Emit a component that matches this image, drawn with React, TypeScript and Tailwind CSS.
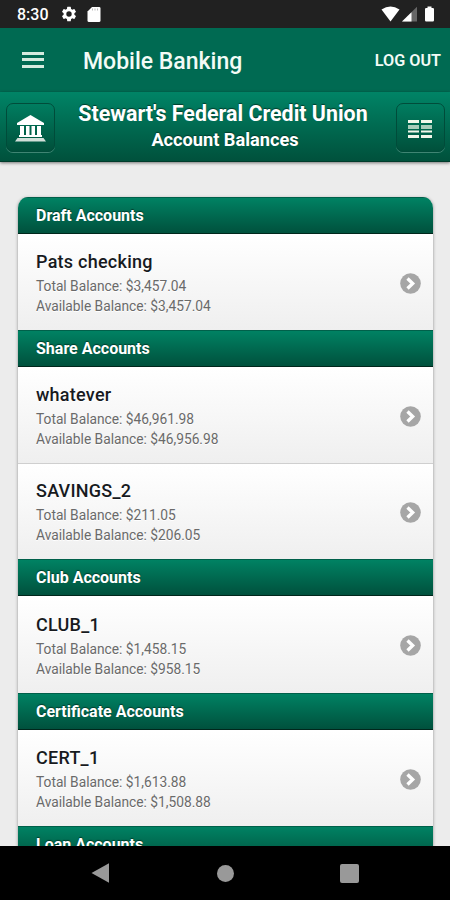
import React from "react";

type Account = { name: string; total: string; available: string; tall?: boolean };
type Group = { title: string; accounts: Account[] };

const groups: Group[] = [
  { title: "Draft Accounts", accounts: [{ name: "Pats checking", total: "$3,457.04", available: "$3,457.04" }] },
  {
    title: "Share Accounts",
    accounts: [
      { name: "whatever", total: "$46,961.98", available: "$46,956.98" },
      { name: "SAVINGS_2", total: "$211.05", available: "$206.05" },
    ],
  },
  { title: "Club Accounts", accounts: [{ name: "CLUB_1", total: "$1,458.15", available: "$958.15", tall: true }] },
  { title: "Certificate Accounts", accounts: [{ name: "CERT_1", total: "$1,613.88", available: "$1,508.88" }] },
  { title: "Loan Accounts", accounts: [] },
];

function StatusBar() {
  return (
    <div className="flex h-7 shrink-0 items-center bg-[#212121] pl-[17px] pr-[15px] text-white">
      <span className="w-[33px] whitespace-nowrap pt-[2px] text-[16px] font-medium leading-7">8:30</span>
      <svg className="ml-[10px] h-[18px] w-[18px]" viewBox="0 0 24 24" fill="currentColor">
        <path d="M19.14 12.94c.04-.3.06-.61.06-.94 0-.32-.02-.64-.07-.94l2.03-1.58a.49.49 0 0 0 .12-.61l-1.92-3.32a.49.49 0 0 0-.59-.22l-2.39.96c-.5-.38-1.03-.7-1.62-.94l-.36-2.54a.48.48 0 0 0-.48-.41h-3.84a.48.48 0 0 0-.47.41l-.36 2.54c-.59.24-1.13.57-1.62.94l-2.39-.96a.48.48 0 0 0-.59.22L2.74 8.87a.48.48 0 0 0 .12.61l2.03 1.58c-.05.3-.09.63-.09.94s.02.64.07.94l-2.03 1.58a.49.49 0 0 0-.12.61l1.92 3.32c.12.22.37.29.59.22l2.39-.96c.5.38 1.03.7 1.62.94l.36 2.54c.05.24.24.41.48.41h3.84c.24 0 .44-.17.47-.41l.36-2.54c.59-.24 1.13-.56 1.62-.94l2.39.96c.22.08.47 0 .59-.22l1.92-3.32a.48.48 0 0 0-.12-.61zM12 15.6A3.6 3.6 0 1 1 12 8.4a3.6 3.6 0 0 1 0 7.2z" />
      </svg>
      <svg className="ml-[9px] h-[15px] w-[14px]" viewBox="0 0 14 15" fill="currentColor">
        <path d="M5 0h7.2Q13.5 0 13.5 1.4v12Q13.5 15 12 15H2Q.5 15 .5 13.500V4.500z" />
        <path d="M5.500 1.500v2M8 1.500v2M10.500 1.500v2" stroke="#aaa" strokeWidth=".8" />
      </svg>
      <div className="grow" />
      <svg className="h-4 w-[54px]" viewBox="0 0 54 16" fill="currentColor">
        <path d="M.5 3.6Q9.500-2.800 18.500 3.600L9.500 15.500Z" />
        <path d="M21 15.500 36 .8V15.500Z" fill="#666" />
        <path d="M21 15.500 30.500 6.200V15.500Z" />
        <path d="M46.500.5h4v1.600h1.400q1.100 0 1.100 1.200v11q0 1.200-1.200 1.200h-6.600q-1.200 0-1.200-1.200v-11q0-1.200 1.100-1.200h1.400z" />
      </svg>
    </div>
  );
}

function AppBar() {
  return (
    <div className="flex h-16 shrink-0 items-center bg-[#006a52] pl-[22px] pr-[9px] text-[#f3fbf6]">
      <div className="flex w-[22px] flex-col gap-[3.500px] pb-[1px]">
        <div className="h-[3px] bg-[#d5ebdf]" />
        <div className="h-[3px] bg-[#d5ebdf]" />
        <div className="h-[3px] bg-[#d5ebdf]" />
      </div>
      <h1 className="ml-[39px] whitespace-nowrap pt-[3px] text-[23px] font-medium leading-7">Mobile Banking</h1>
      <div className="grow" />
      <span className="whitespace-nowrap pt-[2px] text-[16.200px] font-semibold leading-6">LOG OUT</span>
    </div>
  );
}

const squareButton =
  "mt-[11px] flex h-[49px] w-[49px] shrink-0 items-center justify-center rounded-[7px] border border-[#004c3a] bg-linear-to-b from-[#007d60] to-[#00503b] shadow-[0_1px_0_#3f8573]";

function TitleBar() {
  return (
    <header className="relative flex h-[70px] shrink-0 items-start justify-between border-b border-[#003c2c] bg-linear-to-b from-[#008466] to-[#00513c] pl-[6px] pr-[5px] shadow-[0_1px_3px_#00000080]">
      <button className={squareButton}>
        <svg className="mt-[2px] h-[27px] w-[31px]" viewBox="0 0 31 27" fill="white">
          <path d="M15.500 0 29 8v2H2V8z" />
          <path d="M5 11h4v10H5zM11 11h3.500v10H11zM16.500 11H20v10h-3.500zM22 11h4v10h-4z" />
          <path d="M4 20h23v2H4z" />
          <path d="M2.500 23h26l2.500 3.500H0z" fill="#d2dfd9" />
        </svg>
      </button>
      <div className="flex flex-col items-center whitespace-nowrap pr-[5px] pt-[8px] font-bold text-white [text-shadow:0_-1px_1px_#003c2c]">
        <span className="text-[21.400px] leading-[27px]">Stewart's Federal Credit Union</span>
        <span className="pl-1 text-[18.200px] leading-[26px]">Account Balances</span>
      </div>
      <button className={squareButton}>
        <svg className="mt-[3px] h-[18px] w-6" viewBox="0 0 24 18" fill="#f2f7ea">
          <path d="M0 0h11v3H0zM13 0h11v3H13zM0 15h11v3H0zM13 15h11v3H13zM0 10.500h11v2H0zM13 10.500h11v2H13z" />
          <path d="M0 5h11v4H0zM13 5h11v4H13z" fill="#a9ccba" />
        </svg>
      </button>
    </header>
  );
}

function AccountRow({ account }: { account: Account }) {
  return (
    <li className={(account.tall ? "h-[97px]" : "h-24") + " flex items-center justify-between border-t border-[#cfcfcf] bg-linear-to-b from-white to-[#efefef] pl-[18px] pr-3 first:border-white"}>
      <div className="whitespace-nowrap pb-px text-[13.750px] leading-5 text-[#6a6a6a] [text-shadow:0_1px_0_white]">
        <h2 className="text-[18px] font-medium leading-7 tracking-[0.25px] text-[#171a1e]">{account.name}</h2>
        <p>Total Balance: {account.total}</p>
        <p>Available Balance: {account.available}</p>
      </div>
      <svg className="mt-px h-[21px] w-[21px]" viewBox="0 0 21 21">
        <circle cx="10.500" cy="10.500" r="10.300" fill="#a6a6a6" />
        <path d="m7.500 5.500 5.200 5-5.200 5" fill="none" stroke="white" strokeWidth="3.300" />
      </svg>
    </li>
  );
}

export default function App() {
  return (
    <div className="flex h-[900px] w-[450px] flex-col overflow-hidden bg-[#ececec] font-['Roboto',sans-serif]">
      <StatusBar />
      <AppBar />
      <TitleBar />
      <main className="min-h-0 grow overflow-hidden pl-[17px] pr-4 pt-[35px]">
        <div className="overflow-hidden rounded-t-[11px] border-x border-[#c8c8c8] shadow-[0_0_3px_#00000030]">
          {groups.map((group) => (
            <section key={group.title}>
              <h3 className="h-[37px] whitespace-nowrap border-y border-t-[#00604a] border-b-[#00271c] bg-linear-to-b from-[#008263] to-[#00513d] pl-[18px] text-[16px] font-bold leading-[35px] text-white [text-shadow:0_-1px_1px_#003c2c]">
                {group.title}
              </h3>
              <ul>
                {group.accounts.map((account) => (
                  <AccountRow key={account.name} account={account} />
                ))}
              </ul>
            </section>
          ))}
        </div>
      </main>
      <nav className="flex h-[54px] shrink-0 items-center justify-between bg-black px-[91px]">
        <svg className="h-5 w-[18px]" viewBox="0 0 18 20" fill="#999">
          <path d="M.5 10 18 .3v19.400z" />
        </svg>
        <div className="ml-[1px] h-[17px] w-[17px] rounded-full bg-[#999]" />
        <div className="h-[19px] w-[19px] rounded-[2px] bg-[#999]" />
      </nav>
    </div>
  );
}
